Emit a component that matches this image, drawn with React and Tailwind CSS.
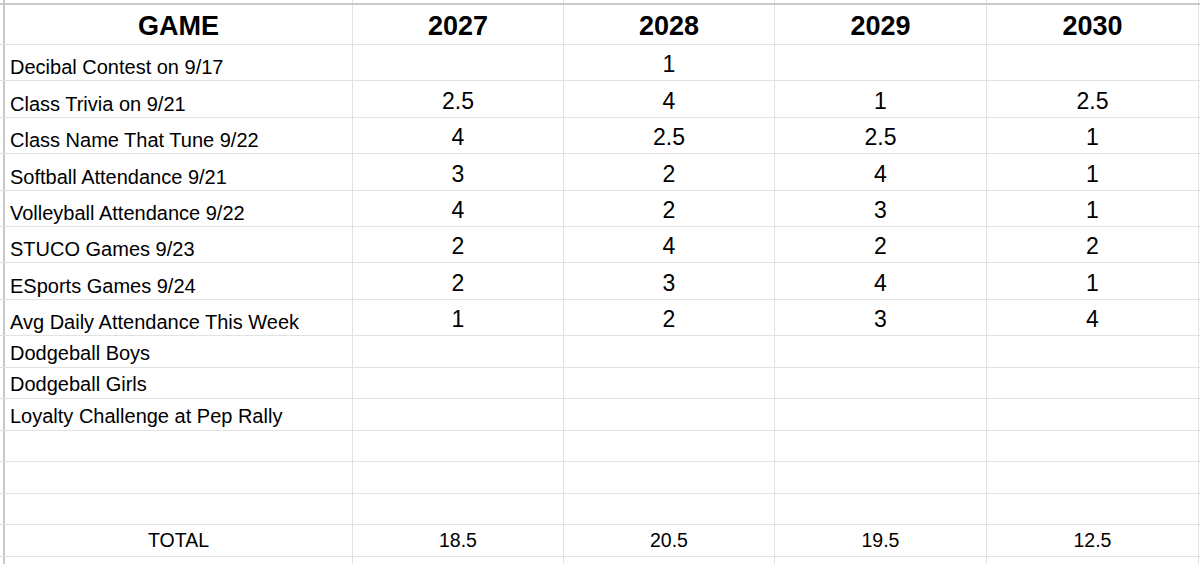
const cols = ["w-[348px]", "w-[211px]", "w-[211px]", "w-[212px]", "w-[212px]"];

const scores = [
  { h: "h-[36px]", game: "Decibal Contest on 9/17", vals: ["", "1", "", ""] },
  { h: "h-[37px]", game: "Class Trivia on 9/21", vals: ["2.5", "4", "1", "2.5"] },
  { h: "h-[36px]", game: "Class Name That Tune 9/22", vals: ["4", "2.5", "2.5", "1"] },
  { h: "h-[37px]", game: "Softball Attendance 9/21", vals: ["3", "2", "4", "1"] },
  { h: "h-[36px]", game: "Volleyball Attendance 9/22", vals: ["4", "2", "3", "1"] },
  { h: "h-[36px]", game: "STUCO Games 9/23", vals: ["2", "4", "2", "2"] },
  { h: "h-[37px]", game: "ESports Games 9/24", vals: ["2", "3", "4", "1"] },
  { h: "h-[36px]", game: "Avg Daily Attendance This Week", vals: ["1", "2", "3", "4"] },
];

const extras = [
  { h: "h-[32px]", game: "Dodgeball Boys" },
  { h: "h-[31px]", game: "Dodgeball Girls" },
  { h: "h-[32px]", game: "Loyalty Challenge at Pep Rally" },
  { h: "h-[31px]", game: "" },
  { h: "h-[32px]", game: "" },
  { h: "h-[31px]", game: "" },
];

const totals = ["18.5", "20.5", "19.5", "12.5"];

const Row = ({ h, children, last = false }) => (
  <div className={`flex shrink-0 ${h} ${last ? "" : "border-b border-[#e2e2e2]"}`}>
    <div className="w-[5px] shrink-0 border-r-2 border-[#c9c9c9]" />
    {children}
    <div className="flex-1" />
  </div>
);

const Cell = ({ i, className = "", children }) => (
  <div className={`${cols[i]} shrink-0 border-r border-[#e2e2e2] flex items-end leading-none ${className}`}>
    {children}
  </div>
);

export default function App() {
  return (
    <div className="w-[1200px] h-[564px] overflow-hidden bg-white text-black flex flex-col font-['Liberation_Sans',Arial,sans-serif]">
      {/* sliver of the row above */}
      <Row h="h-[3px]" last>
        {cols.map((c, i) => (
          <Cell key={i} i={i} />
        ))}
      </Row>
      <div className="h-[2px] shrink-0 bg-[#c9c9c9]" />

      {/* header */}
      <Row h="h-[40px]">
        <Cell i={0} className="justify-center pb-[4px] text-[27px] font-bold">GAME</Cell>
        {["2027", "2028", "2029", "2030"].map((y, i) => (
          <Cell key={y} i={i + 1} className="justify-center pb-[4px] text-[27px] font-bold">
            {y}
          </Cell>
        ))}
      </Row>

      {scores.map((r) => (
        <Row key={r.game} h={r.h}>
          <Cell i={0} className="pl-[5px] pb-[3px] text-[20px] whitespace-nowrap">{r.game}</Cell>
          {r.vals.map((v, i) => (
            <Cell key={i} i={i + 1} className="justify-center pb-[4px] text-[23px]">
              {v}
            </Cell>
          ))}
        </Row>
      ))}

      {extras.map((r, idx) => (
        <Row key={idx} h={r.h}>
          <Cell i={0} className="pl-[5px] pb-[4px] text-[20px] whitespace-nowrap">{r.game}</Cell>
          {[1, 2, 3, 4].map((i) => (
            <Cell key={i} i={i} />
          ))}
        </Row>
      ))}

      {/* totals */}
      <Row h="h-[32px]">
        <Cell i={0} className="justify-center pb-[6px] text-[19.5px]">TOTAL</Cell>
        {totals.map((t, i) => (
          <Cell key={i} i={i + 1} className="justify-center pb-[6px] text-[19.5px]">
            {t}
          </Cell>
        ))}
      </Row>

      {/* partial next row */}
      <Row h="h-[10px]" last>
        {cols.map((c, i) => (
          <Cell key={i} i={i} />
        ))}
      </Row>
    </div>
  );
}
